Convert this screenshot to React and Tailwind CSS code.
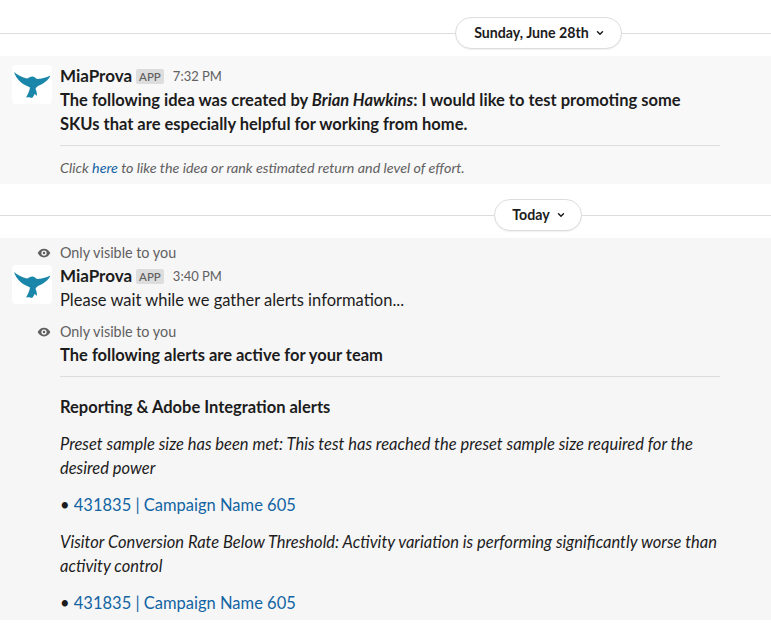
import { ChevronDown } from "lucide-react";

const Bird = () => (
  <svg viewBox="0 0 40 40" className="w-[40px] h-[40px]">
    <path
      fill="#1a86aa"
      d="M2 7 C6 10 10 12.5 15 13.5 C17 13 18 11.5 20.5 11.5 C22.5 11.5 23.5 13 25 14 C29 14 34 12.5 38.5 10.5 C37.5 12.5 36.5 14 35 15.5 C33 17 30 19.5 27 20.5 C25 21.5 24 22.5 23.5 24 C24.5 26 25 28.5 25 31 C24 30 23.5 29.5 22.5 29 C22 30.5 21 32 20 33 C18 32 16 32 14 32.5 C16 29 17.5 26 18 22.5 C15 20.5 11 19.5 8 16.5 C5.5 14 3 10.5 2 7 Z"
    />
  </svg>
);

const DateDivider = ({ label, pillWidth, rightLine, top }) => (
  <div className={`flex items-center ${top}`}>
    <div className="flex-1 h-px bg-[#dddddd]" />
    <button className={`${pillWidth} h-[32px] pl-[2px] rounded-full border border-[#dddddd] bg-white shadow-[0_1px_1px_rgba(0,0,0,0.06)] flex items-center justify-center gap-[6px] text-[14.2px] font-bold text-[#1d1c1d]`}>
      {label}
      <ChevronDown size={10} strokeWidth={3.5} />
    </button>
    <div className={`${rightLine} h-px bg-[#dddddd]`} />
  </div>
);

const Avatar = () => (
  <div className="w-[40px] h-[39px] rounded-[4px] bg-white overflow-hidden shrink-0">
    <Bird />
  </div>
);

const Sender = ({ time }) => (
  <div className="flex items-center h-[22px]">
    <span className="text-[17px] font-bold text-[#1d1c1d]">MiaProva</span>
    <span className="ml-[4px] h-[15px] px-[3px] rounded-[2px] bg-[#dddddd] text-[11.5px] leading-[15px] font-medium text-[#616061]">APP</span>
    <span className="ml-[9px] text-[13px] text-[#616061]">{time}</span>
  </div>
);

const OnlyVisible = () => (
  <div className="flex items-center h-[18px] pl-[37px] text-[14.35px] text-[#616061]">
    <svg viewBox="0 0 16 16" className="w-[14px] h-[14px] mr-[9px] shrink-0">
      <path
        fill="#616061"
        fillRule="evenodd"
        d="M8 3C4.6 3 2 5.4.8 8c1.2 2.6 3.8 5 7.2 5s6-2.4 7.2-5C14 5.4 11.4 3 8 3Zm0 8a3 3 0 1 1 0-6 3 3 0 0 1 0 6Zm0-1.6a1.4 1.4 0 1 0 0-2.8 1.4 1.4 0 0 0 0 2.8Z"
      />
    </svg>
    Only visible to you
  </div>
);

const Link = ({ children }) => <span className="text-[#1264a3]">{children}</span>;

export default function App() {
  return (
    <div className="w-[771px] h-[626px] overflow-hidden bg-white text-[#1d1c1d] font-['Lato',sans-serif] text-[16.5px] leading-[24px]">
      <DateDivider label="Sunday, June 28th" pillWidth="w-[167px]" rightLine="w-[149px]" top="pt-[17px]" />

      {/* Message from June */}
      <div className="mt-[7px] h-[128px] bg-[#f8f8f8] flex pl-[12px] pt-[9px]">
        <Avatar />
        <div className="ml-[8px] w-[660px]">
          <Sender time="7:32 PM" />
          <p className="font-bold mt-[1px] pr-[20px]">
            The following idea was created by <em>Brian Hawkins</em>: I would like to test promoting some SKUs that are especially helpful for working from home.
          </p>
          <div className="h-px bg-[#dddddd] mt-[9px]" />
          <p className="mt-[13px] text-[14.3px] leading-[18px] italic text-[#616061]">
            Click <Link>here</Link> to like the idea or rank estimated return and level of effort.
          </p>
        </div>
      </div>

      <DateDivider label="Today" pillWidth="w-[88px]" rightLine="w-[189px]" top="pt-[15px]" />

      {/* Today's messages */}
      <div className="mt-[7px] h-[382px] bg-[#f6f6f6] pt-[6px]">
        <OnlyVisible />
        <div className="flex pl-[12px] mt-[3px]">
          <Avatar />
          <div className="ml-[8px] w-[660px]">
            <Sender time="3:40 PM" />
            <p className="mt-[1px]">Please wait while we gather alerts information...</p>
          </div>
        </div>
        <div className="mt-[11px]">
          <OnlyVisible />
        </div>
        <div className="ml-[60px] w-[660px]">
          <p className="font-bold mt-[2px]">The following alerts are active for your team</p>
          <div className="h-px bg-[#dddddd] mt-[9px]" />
          <p className="font-bold mt-[18px]">Reporting &amp; Adobe Integration alerts</p>
          <p className="italic mt-[13px]">
            Preset sample size has been met: This test has reached the preset sample size required for the desired power
          </p>
          <p className="mt-[13px]">
            • <Link>431835 | Campaign Name 605</Link>
          </p>
          <p className="italic mt-[13px]">
            Visitor Conversion Rate Below Threshold: Activity variation is performing significantly worse than activity control
          </p>
          <p className="mt-[13px]">
            • <Link>431835 | Campaign Name 605</Link>
          </p>
        </div>
      </div>
    </div>
  );
}
